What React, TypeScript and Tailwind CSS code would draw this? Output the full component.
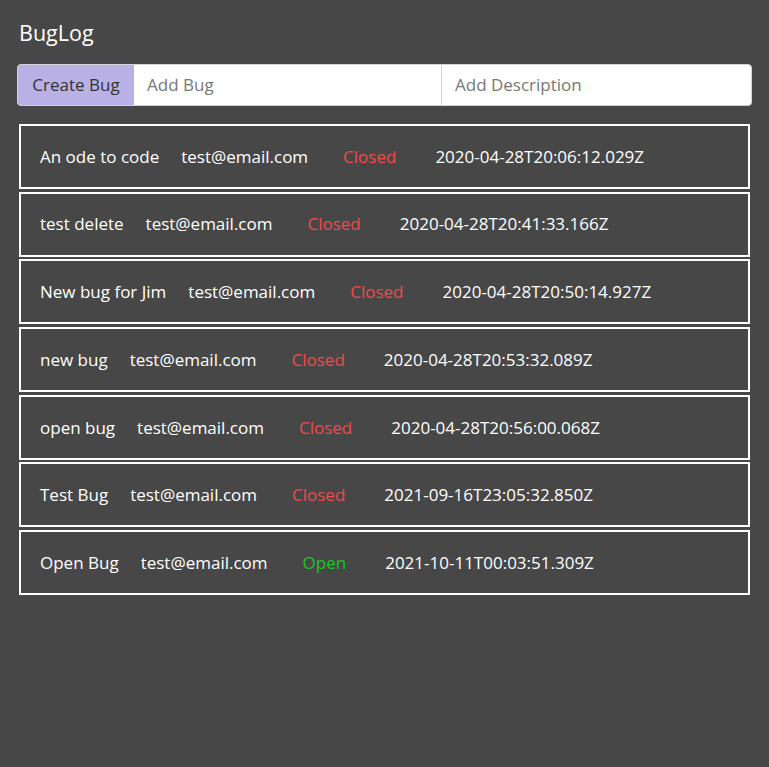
import { useState } from "react";

type Bug = {
  title: string;
  email: string;
  open: boolean;
  date: string;
};

const bugs: Bug[] = [
  { title: "An ode to code", email: "test@email.com", open: false, date: "2020-04-28T20:06:12.029Z" },
  { title: "test delete", email: "test@email.com", open: false, date: "2020-04-28T20:41:33.166Z" },
  { title: "New bug for Jim", email: "test@email.com", open: false, date: "2020-04-28T20:50:14.927Z" },
  { title: "new bug", email: "test@email.com", open: false, date: "2020-04-28T20:53:32.089Z" },
  { title: "open bug", email: "test@email.com", open: false, date: "2020-04-28T20:56:00.068Z" },
  { title: "Test Bug", email: "test@email.com", open: false, date: "2021-09-16T23:05:32.850Z" },
  { title: "Open Bug", email: "test@email.com", open: true, date: "2021-10-11T00:03:51.309Z" },
];

const App = () => {
  const [title, setTitle] = useState("");
  const [desc, setDesc] = useState("");

  return (
    <main className="min-h-screen bg-[#474747] px-[17px] pt-[19px] font-['Open_Sans',sans-serif]">
      <h1 className="ml-[2px] text-[21.5px] leading-[28px] text-white">BugLog</h1>

      <div className="mt-[17px] flex h-[42px] overflow-hidden rounded-[4px] border border-[#ced4da] bg-white">
        <button className="w-[116px] shrink-0 bg-[#b9b0e6] text-[17px] text-[#333]">
          Create Bug
        </button>
        <input
          placeholder="Add Bug"
          value={title}
          onChange={(e) => setTitle(e.target.value)}
          className="w-[308px] shrink-0 border-r border-[#ced4da] px-[13px] text-[17px] text-[#333] outline-none placeholder:text-[#777]"
        />
        <input
          placeholder="Add Description"
          value={desc}
          onChange={(e) => setDesc(e.target.value)}
          className="min-w-0 flex-1 px-[13px] text-[17px] text-[#333] outline-none placeholder:text-[#777]"
        />
      </div>

      <ul className="mx-[2px] mt-[18px] flex flex-col gap-[2.7px]">
        {bugs.map((bug) => (
          <li
            key={bug.date}
            className="flex h-[65px] items-center border-2 border-white pl-[19px] text-[17px] text-white"
          >
            <span>{bug.title}</span>
            <span className="ml-[22px]">{bug.email}</span>
            <span className={`ml-[35px] ${bug.open ? "text-[#1fc41f]" : "text-[#f04a4a]"}`}>
              {bug.open ? "Open" : "Closed"}
            </span>
            <span className="ml-[39px]">{bug.date}</span>
          </li>
        ))}
      </ul>
    </main>
  );
};

export default App;
